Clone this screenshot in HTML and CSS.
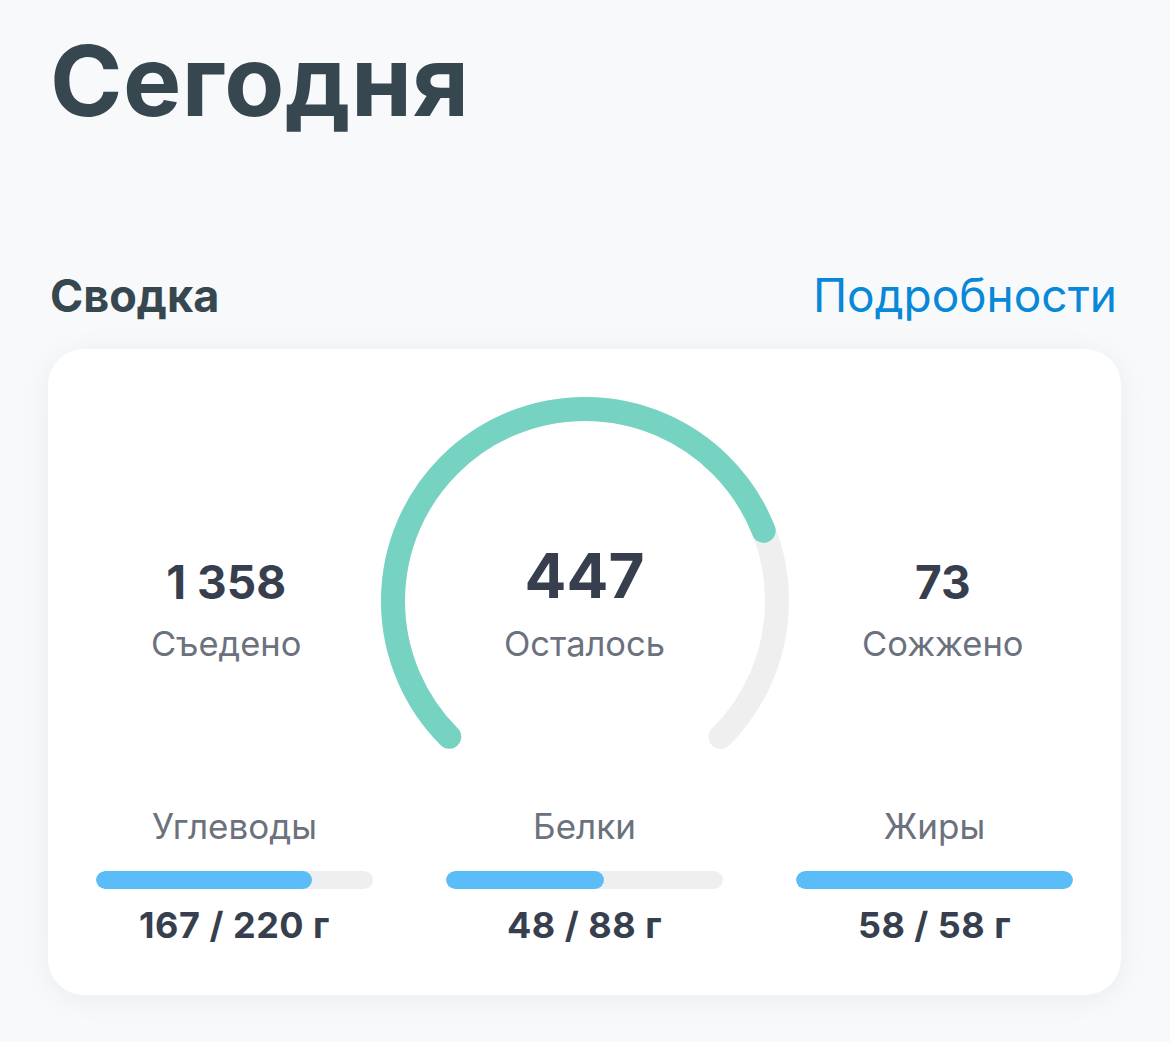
FILE: index.html
```html
<!DOCTYPE html>
<html lang="ru">
<head>
<meta charset="utf-8">
<title>Сегодня</title>
<link rel="stylesheet" href="styles.css">
</head>
<body>
<main class="page">
  <h1 class="title">Сегодня</h1>
  <div class="section-head">
    <h2 class="section-title">Сводка</h2>
    <a class="section-link" href="#">Подробности</a>
  </div>
  <section class="card">
    <div class="top-row">
      <div class="side-stat">
        <div class="side-num">1 358</div>
        <div class="stat-label">Съедено</div>
      </div>
      <div class="gauge">
        <svg class="gauge-svg" width="408" height="360" viewBox="0 0 408 360">
          <circle class="gauge-track" cx="204" cy="204" r="192" transform="rotate(135 204 204)"></circle>
          <circle class="gauge-fill" cx="204" cy="204" r="192" transform="rotate(135 204 204)"></circle>
        </svg>
        <div class="gauge-center">
          <div class="center-num">447</div>
          <div class="stat-label center-label">Осталось</div>
        </div>
      </div>
      <div class="side-stat">
        <div class="side-num">73</div>
        <div class="stat-label">Сожжено</div>
      </div>
    </div>
    <div class="macros">
      <div class="macro">
        <div class="macro-label">Углеводы</div>
        <div class="bar"><div class="bar-fill" style="width:78%"></div></div>
        <div class="macro-value">167 / 220 г</div>
      </div>
      <div class="macro">
        <div class="macro-label">Белки</div>
        <div class="bar"><div class="bar-fill" style="width:57%"></div></div>
        <div class="macro-value">48 / 88 г</div>
      </div>
      <div class="macro">
        <div class="macro-label">Жиры</div>
        <div class="bar"><div class="bar-fill" style="width:100%"></div></div>
        <div class="macro-value">58 / 58 г</div>
      </div>
    </div>
  </section>
</main>
</body>
</html>
```

FILE: styles.css
```css
* { box-sizing: border-box; }
html, body {
  margin: 0;
  padding: 0;
  background: #f8f9fb;
}
body {
  font-family: Inter, "Noto Sans", sans-serif;
  width: 1170px;
  height: 1042px;
  overflow: hidden;
}
.page {
  padding: 32px 49px 0 48px;
}
.title {
  margin: 0 0 0 2px;
  font-size: 98px;
  line-height: 1;
  font-weight: 700;
  color: #37474f;
  letter-spacing: 0.5px;
}
.section-head {
  display: flex;
  justify-content: space-between;
  align-items: baseline;
  margin-top: 142px;
  padding: 0 4px 0 2px;
}
.section-title {
  margin: 0;
  font-size: 45px;
  line-height: 1;
  font-weight: 700;
  color: #37474f;
}
.section-link {
  font-size: 46px;
  line-height: 1;
  color: #0788d8;
  text-decoration: none;
}
.card {
  margin-top: 31px;
  background: #ffffff;
  border-radius: 36px;
  box-shadow: 0 4px 30px rgba(30, 40, 60, 0.06);
  padding: 48px 24px 52px;
}
.top-row {
  display: grid;
  grid-template-columns: 1fr 408px 1fr;
  height: 360px;
}
.side-stat {
  display: flex;
  flex-direction: column;
  align-items: center;
  padding-top: 162px;
}
.side-num {
  font-size: 46px;
  line-height: 1;
  font-weight: 700;
  color: #373f4e;
}
.stat-label {
  margin-top: 22px;
  font-size: 34.5px;
  line-height: 1;
  color: #6b717d;
}
.gauge {
  position: relative;
  width: 408px;
  height: 360px;
}
.gauge-svg { display: block; }
.gauge-track {
  fill: none;
  stroke: #efefef;
  stroke-width: 24;
  stroke-linecap: round;
  stroke-dasharray: 904.78 1206.37;
}
.gauge-fill {
  fill: none;
  stroke: #76d3c1;
  stroke-width: 24;
  stroke-linecap: round;
  stroke-dasharray: 681.9 1206.37;
}
.gauge-center {
  position: absolute;
  left: 0;
  right: 0;
  top: 148px;
  display: flex;
  flex-direction: column;
  align-items: center;
}
.center-num {
  font-size: 62px;
  line-height: 1;
  font-weight: 700;
  color: #373f4e;
}
.center-label { margin-top: 19.5px; }
.macros {
  display: grid;
  grid-template-columns: repeat(3, 1fr);
  column-gap: 73px;
  padding: 0 24px;
  margin-top: 52px;
}
.macro {
  display: flex;
  flex-direction: column;
  align-items: center;
}
.macro-label {
  font-size: 35px;
  line-height: 1;
  color: #6b717d;
}
.bar {
  margin-top: 27px;
  width: 100%;
  height: 18px;
  border-radius: 9px;
  background: #efefef;
  overflow: hidden;
}
.bar-fill {
  height: 100%;
  border-radius: 9px;
  background: #5bbdf8;
}
.macro-value {
  margin-top: 18px;
  font-size: 36px;
  line-height: 1;
  font-weight: 700;
  color: #373f4e;
  letter-spacing: 0.5px;
}
```
